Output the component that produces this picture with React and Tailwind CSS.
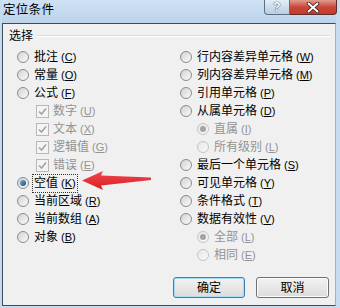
import React from 'react';

const leftRows = [
  { t: '批注', k: 'C' },
  { t: '常量', k: 'O' },
  { t: '公式', k: 'F' },
  { t: '数字', k: 'U', check: true },
  { t: '文本', k: 'X', check: true },
  { t: '逻辑值', k: 'G', check: true },
  { t: '错误', k: 'E', check: true },
  { t: '空值', k: 'K', checked: true, focus: true },
  { t: '当前区域', k: 'R' },
  { t: '当前数组', k: 'A' },
  { t: '对象', k: 'B' },
];

const rightRows = [
  { t: '行内容差异单元格', k: 'W' },
  { t: '列内容差异单元格', k: 'M' },
  { t: '引用单元格', k: 'P' },
  { t: '从属单元格', k: 'D' },
  { t: '直属', k: 'I', sub: true, disabled: true, checked: true },
  { t: '所有级别', k: 'L', sub: true, disabled: true },
  { t: '最后一个单元格', k: 'S' },
  { t: '可见单元格', k: 'Y' },
  { t: '条件格式', k: 'T' },
  { t: '数据有效性', k: 'V' },
  { t: '全部', k: 'L', sub: true, disabled: true, checked: true },
  { t: '相同', k: 'E', sub: true, disabled: true },
];

function Radio({ checked, disabled }) {
  return (
    <span
      className={
        'w-[12px] h-[12px] shrink-0 rounded-full border flex items-center justify-center ' +
        (disabled
          ? 'border-[#c4c4c4] bg-linear-to-br from-[#e6e6e6] to-[#fafafa]'
          : 'border-[#8a8c8e] bg-linear-to-br from-[#d2d2d2] to-[#fbfbfb]')
      }
    >
      {checked && (
        <span
          className={
            'w-[6px] h-[6px] rounded-full ' +
            (disabled ? 'bg-[#a4a4a4]' : 'bg-linear-to-br from-[#6fb0e0] to-[#1b4f7e]')
          }
        />
      )}
    </span>
  );
}

function Check() {
  return (
    <span className="w-[13px] h-[13px] shrink-0 border border-[#b8b8b8] bg-[#f4f4f4] flex items-center justify-center">
      <svg width="9" height="9" viewBox="0 0 9 9">
        <path d="M1 4.5 L3.5 7 L8 1.5" fill="none" stroke="#a3a3a3" strokeWidth="1.6" />
      </svg>
    </span>
  );
}

function Label({ t, k, disabled, focus }) {
  return (
    <span
      className={
        'flex items-center h-[17px] px-[1px] ' +
        (focus ? 'outline outline-1 outline-dotted outline-[#333] ' : '') +
        (disabled ? 'text-[#939393]' : 'text-black')
      }
    >
      <span className="text-[12px] leading-none">{t}</span>
      <span className="text-[11px] leading-none ml-[3px]">
        (<span className="underline">{k}</span>)
      </span>
    </span>
  );
}

function Row({ r }) {
  return (
    <div className={'h-[18px] flex items-center ' + (r.check ? 'pl-[19px] gap-[3px]' : r.sub ? 'pl-[17px] gap-[4px]' : 'gap-[4px]')}>
      {r.check ? <Check /> : <Radio checked={r.checked} disabled={r.disabled} />}
      <Label t={r.t} k={r.k} disabled={r.disabled || r.check} focus={r.focus} />
    </div>
  );
}

export default function App() {
  return (
    <div className="w-[340px] h-[308px] bg-[#c5dbf0] flex flex-col pl-[2px] pr-[4px] pb-[2px] font-['Liberation_Sans','Noto_Sans_CJK_SC',sans-serif] select-none relative">
      {/* title bar */}
      <div className="h-[23px] shrink-0 flex items-start relative bg-linear-to-b from-[#cfe2f5] to-[#bcd3ea]">
        <span className="text-[12.5px] leading-none text-black mt-[4px] ml-[1px] tracking-[0.3px]">定位条件</span>
        <div className="ml-auto flex mr-[-1px]">
          <div className="w-[26px] h-[15px] rounded-bl-[4px] border border-t-0 border-[#5d6f84] bg-linear-to-b from-[#e3edf7] to-[#b9cde2] flex items-center justify-center">
            <span className="text-[12px] font-bold leading-none text-white [text-shadow:0_0_1px_#304560,0_0_1px_#304560]">?</span>
          </div>
          <div className="w-[47px] h-[15px] rounded-br-[4px] border border-l-0 border-t-0 border-[#5d2a2a] bg-linear-to-b from-[#e19c8e] via-[#c9463a] to-[#c7382c] flex items-center justify-center">
            <svg width="14" height="11" viewBox="0 0 14 11">
              <path d="M2.5 1.5 L11.5 9.5 M11.5 1.5 L2.5 9.5" stroke="#3a1b1b" strokeWidth="3.6" strokeLinecap="round" />
              <path d="M2.5 1.5 L11.5 9.5 M11.5 1.5 L2.5 9.5" stroke="#ffffff" strokeWidth="2" strokeLinecap="round" />
            </svg>
          </div>
        </div>
      </div>

      {/* client area */}
      <div className="flex-1 bg-[#f0f0f0] border border-[#3f4b5a] border-r-[#9fb3c8] flex flex-col">
        <div className="h-[16px] mt-[4px] flex items-center pl-[6px] pr-[5px]">
          <span className="text-[12px] leading-none text-black">选择</span>
          <div className="flex-1 ml-[4px] h-[2px] border-t border-[#d5dbe0] border-b border-b-white" />
        </div>

        <div className="flex mt-[4px] pl-[14px]">
          <div className="w-[163px] flex flex-col">
            {leftRows.map((r, i) => (
              <Row key={i} r={r} />
            ))}
          </div>
          <div className="flex flex-col">
            {rightRows.map((r, i) => (
              <Row key={i} r={r} />
            ))}
          </div>
        </div>

        <div className="flex mt-[13px] pl-[170px] gap-[11px]">
          <button className="w-[72px] h-[21px] rounded-[3px] border border-[#3c7fb1] bg-linear-to-b from-[#f2f2f2] to-[#dcdcdc] shadow-[inset_0_0_0_1px_#a8dcf5] text-[12px] text-black leading-none">
            确定
          </button>
          <button className="w-[73px] h-[21px] rounded-[3px] border border-[#707070] bg-linear-to-b from-[#f2f2f2] to-[#dcdcdc] shadow-[inset_0_0_0_1px_#fcfcfc] text-[12px] text-black leading-none">
            取消
          </button>
        </div>
      </div>

      {/* red annotation arrow */}
      <svg className="absolute left-[80px] top-[168px]" width="74" height="26" viewBox="0 0 74 26">
        <defs>
          <linearGradient id="ar" x1="0" y1="0" x2="0" y2="1">
            <stop offset="0" stopColor="#f2484c" />
            <stop offset="1" stopColor="#d61e24" />
          </linearGradient>
        </defs>
        <path d="M2 12.5 L23 3 L21 7.5 L71 9.5 L71 12 L21 17.5 L23 22 Z" fill="url(#ar)" />
      </svg>
    </div>
  );
}
